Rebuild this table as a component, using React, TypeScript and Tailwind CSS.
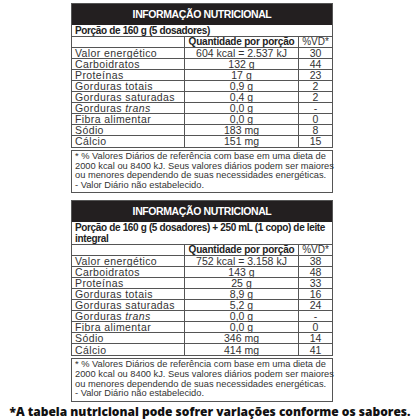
const table1 = [
  ['Valor energético', '604 kcal = 2.537 kJ', '30'],
  ['Carboidratos', '132 g', '44'],
  ['Proteínas', '17 g', '23'],
  ['Gorduras totais', '0,9 g', '2'],
  ['Gorduras saturadas', '0,4 g', '2'],
  ['Gorduras trans', '0,0 g', '-'],
  ['Fibra alimentar', '0,0 g', '0'],
  ['Sódio', '183 mg', '8'],
  ['Cálcio', '151 mg', '15'],
];

const table2 = [
  ['Valor energético', '752 kcal = 3.158 kJ', '38'],
  ['Carboidratos', '143 g', '48'],
  ['Proteínas', '25 g', '33'],
  ['Gorduras totais', '8,9 g', '16'],
  ['Gorduras saturadas', '5,2 g', '24'],
  ['Gorduras trans', '0,0 g', '-'],
  ['Fibra alimentar', '0,0 g', '0'],
  ['Sódio', '346 mg', '14'],
  ['Cálcio', '414 mg', '41'],
];

function Label({ text }: { text: string }) {
  if (text === 'Gorduras trans') {
    return (
      <>
        Gorduras&nbsp;<span className="italic">trans</span>
      </>
    );
  }
  return <>{text}</>;
}

function NutritionTable({ portion, rows }: { portion: React.ReactNode; rows: string[][] }) {
  return (
    <div className="w-[262px]">
      <div className="border border-[#555] text-[10px] text-[#333]">
        <div className="h-[21px] bg-[#231f20] flex items-center justify-center text-white font-bold text-[10.5px] tracking-[-0.4px]">
          INFORMAÇÃO NUTRICIONAL
        </div>
        <div className="border-b border-[#555] px-[3px] leading-[11px] font-bold text-[#222] whitespace-nowrap tracking-[-0.35px]">
          {portion}
        </div>
        <div className="grid grid-cols-[113px_114px_1fr] h-[11px] leading-none border-b border-[#555]">
          <div className="border-r border-[#555]" />
          <div className="border-r border-[#555] flex items-center justify-center font-bold text-[#222] tracking-[-0.2px]">
            Quantidade por porção
          </div>
          <div className="flex items-center justify-center">%VD*</div>
        </div>
        {rows.map((r, i) => (
          <div
            key={r[0]}
            className={`grid grid-cols-[113px_114px_1fr] h-[11px] leading-none ${i < rows.length - 1 ? 'border-b border-[#555]' : ''}`}
          >
            <div className="border-r border-[#555] px-[3px] flex items-center text-[10.5px] tracking-[0.4px] whitespace-nowrap">
              <Label text={r[0]} />
            </div>
            <div className="border-r border-[#555] flex items-center justify-center text-[10.5px]">{r[1]}</div>
            <div className="flex items-center justify-center text-[10.5px]">{r[2]}</div>
          </div>
        ))}
      </div>
      <div className="mt-[2px] border border-[#555] px-[3px] pt-[1px] pb-[2px] text-[9.3px] leading-[9.6px] text-[#333] whitespace-nowrap">
        * % Valores Diários de referência com base em uma dieta de
        <br />
        2000 kcal ou 8400 kJ. Seus valores diários podem ser maiores
        <br />
        ou menores dependendo de suas necessidades energéticas.
        <br />- Valor Diário não estabelecido.
      </div>
    </div>
  );
}

export default function App() {
  return (
    <div className="w-[420px] h-[420px] bg-white overflow-hidden" style={{ fontFamily: '"Liberation Sans", Arial, sans-serif' }}>
      <div className="pl-[71px] pt-[3px] flex flex-col gap-[7px]">
        <NutritionTable portion="Porção de 160 g (5 dosadores)" rows={table1} />
        <NutritionTable
          portion={
            <>
              Porção de 160 g (5 dosadores) + 250 mL (1 copo) de leite
              <br />
              integral
            </>
          }
          rows={table2}
        />
      </div>
      <p className="mt-[1px] text-center text-[12px] leading-[18px] font-extrabold text-[#111] whitespace-nowrap" style={{ fontFamily: '"Open Sans", sans-serif' }}>
        *A tabela nutricional pode sofrer variações conforme os sabores.
      </p>
    </div>
  );
}
